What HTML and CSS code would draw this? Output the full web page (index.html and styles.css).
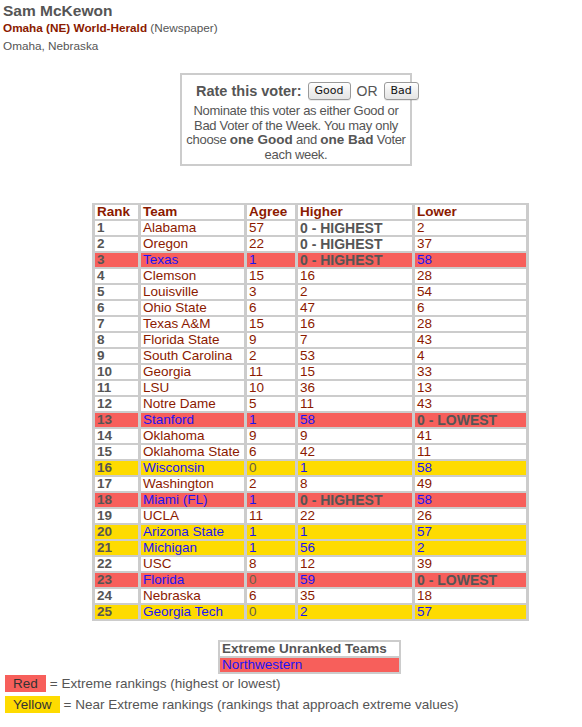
FILE: index.html
```html
<!DOCTYPE html>
<html>
<head>
<meta charset="utf-8">
<title>Sam McKewon</title>
<link rel="stylesheet" href="styles.css">
</head>
<body>
<div class="page">
  <div class="voter">
    <div class="name">Sam McKewon</div>
    <div class="org"><span class="outlet">Omaha (NE) World-Herald</span> (Newspaper)</div>
    <div class="loc">Omaha, Nebraska</div>
  </div>

  <div class="rate">
    <div class="rate-line"><b>Rate this voter:</b><button class="btn">Good</button><span>OR</span><button class="btn">Bad</button></div>
    <div class="desc">
      <span>Nominate this voter as either Good or</span>
      <span>Bad Voter of the Week. You may only</span>
      <span>choose <b>one Good</b> and <b>one Bad</b> Voter</span>
      <span>each week.</span>
    </div>
  </div>

  <table class="ranks">
    <thead>
      <tr><th class="c-rank">Rank</th><th class="c-team">Team</th><th class="c-agree">Agree</th><th class="c-higher">Higher</th><th class="c-lower">Lower</th></tr>
    </thead>
    <tbody>
      <tr><td class="rk">1</td><td>Alabama</td><td>57</td><td class="ext">0 - HIGHEST</td><td>2</td></tr>
      <tr><td class="rk">2</td><td>Oregon</td><td>22</td><td class="ext">0 - HIGHEST</td><td>37</td></tr>
      <tr class="red"><td class="rk">3</td><td><a>Texas</a></td><td><a>1</a></td><td class="ext">0 - HIGHEST</td><td><a>58</a></td></tr>
      <tr><td class="rk">4</td><td>Clemson</td><td>15</td><td>16</td><td>28</td></tr>
      <tr><td class="rk">5</td><td>Louisville</td><td>3</td><td>2</td><td>54</td></tr>
      <tr><td class="rk">6</td><td>Ohio State</td><td>6</td><td>47</td><td>6</td></tr>
      <tr><td class="rk">7</td><td>Texas A&amp;M</td><td>15</td><td>16</td><td>28</td></tr>
      <tr><td class="rk">8</td><td>Florida State</td><td>9</td><td>7</td><td>43</td></tr>
      <tr><td class="rk">9</td><td>South Carolina</td><td>2</td><td>53</td><td>4</td></tr>
      <tr><td class="rk">10</td><td>Georgia</td><td>11</td><td>15</td><td>33</td></tr>
      <tr><td class="rk">11</td><td>LSU</td><td>10</td><td>36</td><td>13</td></tr>
      <tr><td class="rk">12</td><td>Notre Dame</td><td>5</td><td>11</td><td>43</td></tr>
      <tr class="red"><td class="rk">13</td><td><a>Stanford</a></td><td><a>1</a></td><td><a>58</a></td><td class="ext">0 - LOWEST</td></tr>
      <tr><td class="rk">14</td><td>Oklahoma</td><td>9</td><td>9</td><td>41</td></tr>
      <tr><td class="rk">15</td><td>Oklahoma State</td><td>6</td><td>42</td><td>11</td></tr>
      <tr class="yellow"><td class="rk">16</td><td><a>Wisconsin</a></td><td class="zero">0</td><td><a>1</a></td><td><a>58</a></td></tr>
      <tr><td class="rk">17</td><td>Washington</td><td>2</td><td>8</td><td>49</td></tr>
      <tr class="red"><td class="rk">18</td><td><a>Miami (FL)</a></td><td><a>1</a></td><td class="ext">0 - HIGHEST</td><td><a>58</a></td></tr>
      <tr><td class="rk">19</td><td>UCLA</td><td>11</td><td>22</td><td>26</td></tr>
      <tr class="yellow"><td class="rk">20</td><td><a>Arizona State</a></td><td><a>1</a></td><td><a>1</a></td><td><a>57</a></td></tr>
      <tr class="yellow"><td class="rk">21</td><td><a>Michigan</a></td><td><a>1</a></td><td><a>56</a></td><td><a>2</a></td></tr>
      <tr><td class="rk">22</td><td>USC</td><td>8</td><td>12</td><td>39</td></tr>
      <tr class="red"><td class="rk">23</td><td><a>Florida</a></td><td class="zero">0</td><td><a>59</a></td><td class="ext">0 - LOWEST</td></tr>
      <tr><td class="rk">24</td><td>Nebraska</td><td>6</td><td>35</td><td>18</td></tr>
      <tr class="yellow"><td class="rk">25</td><td><a>Georgia Tech</a></td><td class="zero">0</td><td><a>2</a></td><td><a>57</a></td></tr>
    </tbody>
  </table>

  <table class="unranked">
    <tr><th>Extreme Unranked Teams</th></tr>
    <tr class="red"><td><a>Northwestern</a></td></tr>
  </table>

  <div class="legend">
    <div class="legend-row"><span class="swatch sw-red">Red</span><span>= Extreme rankings (highest or lowest)</span></div>
    <div class="legend-row"><span class="swatch sw-yellow">Yellow</span><span>= Near Extreme rankings (rankings that approach extreme values)</span></div>
  </div>
</div>
</body>
</html>
```

FILE: styles.css
```css
html, body {
  margin: 0;
  padding: 0;
  background: #fff;
}

.page {
  padding: 2px 3px 0 3px;
  font-family: "Liberation Sans", Arial, sans-serif;
  font-size: 13.5px;
  color: #555;
}

.name {
  font-size: 15.5px;
  line-height: 18px;
  font-weight: bold;
  color: #555;
}

.org {
  font-size: 11.75px;
  line-height: 15px;
  color: #555;
}

.outlet {
  font-weight: bold;
  color: #8b1a00;
}

.loc {
  margin-top: 3px;
  font-size: 11.75px;
  line-height: 15px;
  color: #555;
}

/* Rate box */
.rate {
  margin-top: 20px;
  margin-left: 177px;
  width: 200px;
  padding: 7px 14px 2px 14px;
  border: 2px solid #ccc;
  font-size: 13.5px;
  line-height: 14.5px;
  color: #555;
}

.rate-line {
  display: flex;
  align-items: center;
  gap: 6px;
  height: 18px;
  white-space: nowrap;
  margin-bottom: 4px;
  font-size: 14px;
}

.rate-line b {
  font-size: 14.5px;
}

.btn {
  font-family: "DejaVu Sans", sans-serif;
  font-size: 11px;
  line-height: 14px;
  height: 18px;
  padding: 0 6px;
  color: #111;
  border: 1px solid #9a9a9a;
  border-radius: 3px;
  background: linear-gradient(#ffffff, #f0f0f0 50%, #e4e4e4);
  box-shadow: 0 1px 0 rgba(0,0,0,0.08);
}

.desc {
  display: flex;
  flex-direction: column;
  align-items: center;
  white-space: nowrap;
  font-size: 13px;
  letter-spacing: -0.3px;
  line-height: 14.5px;
}

.desc b {
  font-size: 13.5px;
  letter-spacing: 0;
}

/* Rankings table */
.ranks {
  margin-top: 37px;
  margin-left: 89px;
  table-layout: fixed;
  width: 437px;
  border-collapse: separate;
  border-spacing: 3px 2px;
  background: #ccc;
  font-size: 13.5px;
  line-height: 14px;
}

.ranks th,
.ranks td {
  background: #fff;
  padding: 0 2px;
  height: 14px;
  text-align: left;
  white-space: nowrap;
  color: #8b1a00;
  font-weight: normal;
}

.ranks th {
  font-weight: bold;
  color: #8b1a00;
}

.c-rank { width: 39px; }
.c-team { width: 99px; }
.c-agree { width: 44px; }
.c-higher { width: 110px; }
.c-lower { width: 107px; }

.ranks td.rk {
  font-weight: bold;
  color: #555;
}

.ranks td.ext {
  font-weight: bold;
  font-size: 14px;
  color: #555;
}

.ranks td.zero {
  color: #6a5f45;
}

.ranks tr.red td { background: #f75f5b; }
.ranks tr.yellow td { background: #fedb00; }

a {
  color: #1a14f5;
  text-decoration: none;
}

/* Unranked table */
.unranked {
  margin-top: 19px;
  margin-left: 215px;
  width: 183px;
  border-collapse: separate;
  border-spacing: 2px;
  background: #ccc;
  font-size: 13.5px;
  line-height: 14px;
}

.unranked th,
.unranked td {
  padding: 0 2px;
  height: 14px;
  text-align: left;
  white-space: nowrap;
}

.unranked th {
  background: #fff;
  color: #555;
  font-weight: bold;
}

.unranked tr.red td {
  background: #f75f5b;
}

/* Legend */
.legend {
  margin-top: 1px;
  margin-left: 2px;
  font-size: 13.5px;
  line-height: 17px;
  color: #555;
}

.legend-row {
  display: flex;
  align-items: center;
  gap: 4px;
  height: 17px;
  margin-bottom: 4px;
  white-space: nowrap;
}

.swatch {
  display: inline-block;
  padding: 0 8px;
  height: 17px;
  color: #333;
}

.sw-red { background: #f75f5b; }
.sw-yellow { background: #fedb00; }
```
